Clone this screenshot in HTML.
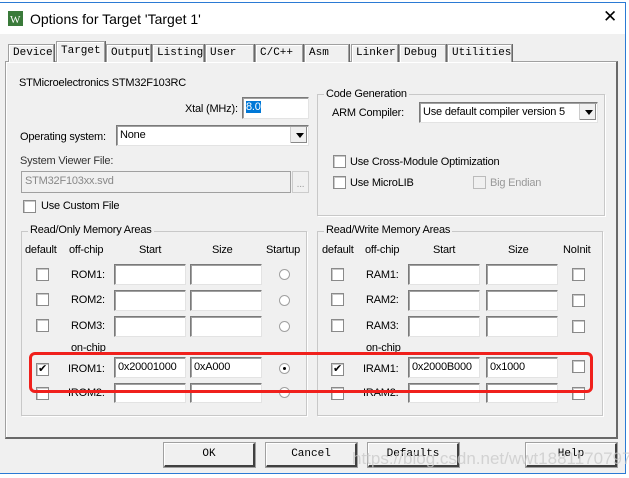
<!DOCTYPE html>
<html><head><meta charset="utf-8"><style>
*{box-sizing:border-box;margin:0;padding:0}
body{width:629px;height:478px;background:#fff;position:relative;overflow:hidden;font-family:"Liberation Sans",Arial,sans-serif;font-size:11px;letter-spacing:-0.2px;line-height:12px;color:#000}
.a{position:absolute;white-space:nowrap}
.win{position:absolute;left:0;top:2px;width:626px;height:472px;border:1px solid #2b7ad4;border-left:none;background:#f0f0f0}
.title{position:absolute;left:0;top:0;width:625px;height:31px;background:#fff}
.tab{position:absolute;top:41px;height:18px;border:1px solid #a0a0a0;border-bottom:none;background:#f0f0f0;font-family:"Liberation Mono",monospace;font-size:11px;letter-spacing:0;padding-left:4px;line-height:16px;box-shadow:inset 1px 1px 0 #fff, 1px 0 0 #696969}
.panel{position:absolute;left:5px;top:58px;width:613px;height:378px;border:1px solid #a0a0a0;border-right:2px solid #696969;border-bottom:2px solid #696969;box-shadow:inset 1px 1px 0 #fff}
.grp{position:absolute;border:1px solid #c8c8c8;box-shadow:1px 1px 0 #fff}
.leg{position:absolute;background:#f0f0f0;padding:0 2px;line-height:13px}
.in{position:absolute;height:21px;background:#fff;border:1px solid #7a7a7a;border-right-color:#e3e3e3;border-bottom-color:#e3e3e3;box-shadow:inset 1px 1px 0 #a0a0a0;padding:2px 3px;line-height:14px}
.cb{position:absolute;width:13px;height:13px;background:#fff;border:1px solid #8a8a8a;box-shadow:inset 1px 1px 0 #c8c8c8}
.rd{position:absolute;width:11px;height:11px;border-radius:50%;background:#fff;border:1px solid #a0a0a0}
.btn{position:absolute;top:440px;width:91px;height:24px;border:1px solid #fff;border-right:2px solid #404040;border-bottom:2px solid #404040;outline:1px solid #a0a0a0;background:#f0f0f0;font-family:"Liberation Mono",monospace;font-size:11px;letter-spacing:0;text-align:center;line-height:21px}
.dd{position:absolute;right:1px;top:1px;width:17px;height:16px;background:#f0f0f0;border-left:1px solid #ccc;box-shadow:inset -1px -1px 0 #888}
.dd:after{content:"";position:absolute;left:5px;top:6px;border:4px solid transparent;border-top:5px solid #000;border-bottom:none}
</style></head><body>
<div class="win">
<div class="title">
<svg class="a" style="left:8px;top:8px" width="15" height="15"><rect width="15" height="15" fill="#3a7a3a"/><text x="2" y="12" font-size="11" fill="#fff" font-family="Liberation Serif">W</text></svg>
<div class="a" style="left:30px;top:8px;font-size:14px;letter-spacing:0;line-height:16px;color:#000">Options for Target 'Target 1'</div>
<div class="a" style="left:603px;top:5px;font-size:17px;line-height:18px;font-weight:300">✕</div>
</div>
<div class="panel"></div>
<div class="tab" style="left:8px;width:46px">Device</div>
<div class="tab" style="left:56px;width:49px;top:38px;height:21px;z-index:2;border-bottom:none;padding-top:1px">Target</div>
<div class="tab" style="left:106px;width:45px">Output</div>
<div class="tab" style="left:152px;width:52px">Listing</div>
<div class="tab" style="left:205px;width:49px">User</div>
<div class="tab" style="left:255px;width:48px">C/C++</div>
<div class="tab" style="left:304px;width:45px">Asm</div>
<div class="tab" style="left:351px;width:47px">Linker</div>
<div class="tab" style="left:399px;width:47px">Debug</div>
<div class="tab" style="left:447px;width:65px">Utilities</div>

<div class="a" style="left:19px;top:74px">STMicroelectronics STM32F103RC</div>
<div class="a" style="left:185px;top:100px">Xtal (MHz):</div>
<div class="in" style="left:242px;top:94px;width:67px;height:22px"><span style="background:#0078d7;color:#fff">8.0</span></div>
<div class="a" style="left:20px;top:128px">Operating system:</div>
<div class="in" style="left:116px;top:122px;width:193px;height:21px;padding-top:2px">None<div class="dd"></div></div>
<div class="a" style="left:20px;top:152px;color:#333">System Viewer File:</div>
<div class="in" style="left:21px;top:168px;width:270px;height:22px;background:#f0f0f0;color:#888;box-shadow:none;border-color:#a0a0a0">STM32F103xx.svd</div>
<div class="a" style="left:292px;top:168px;width:17px;height:22px;border:1px solid #ccc;color:#999;text-align:center;font-size:10px;line-height:26px">...</div>
<div class="cb" style="left:23px;top:197px"></div>
<div class="a" style="left:41px;top:197px">Use Custom File</div>

<div class="grp" style="left:317px;top:91px;width:288px;height:122px"></div>
<div class="leg a" style="left:324px;top:85px">Code Generation</div>
<div class="a" style="left:332px;top:104px">ARM Compiler:</div>
<div class="in" style="left:419px;top:99px;width:179px;height:21px">Use default compiler version 5<div class="dd"></div></div>
<div class="cb" style="left:333px;top:152px"></div>
<div class="a" style="left:350px;top:153px">Use Cross-Module Optimization</div>
<div class="cb" style="left:333px;top:173px"></div>
<div class="a" style="left:350px;top:174px">Use MicroLIB</div>
<div class="cb" style="left:473px;top:173px;background:#f0f0f0;border-color:#bbb;box-shadow:none"></div>
<div class="a" style="left:490px;top:174px;color:#999">Big Endian</div>

<div class="grp" style="left:21px;top:228px;width:286px;height:185px"></div>
<div class="leg a" style="left:28px;top:221px">Read/Only Memory Areas</div>
<div class="a" style="left:25px;top:241px">default</div><div class="a" style="left:69px;top:241px">off-chip</div><div class="a" style="left:139px;top:241px">Start</div><div class="a" style="left:212px;top:241px">Size</div><div class="a" style="left:266px;top:241px">Startup</div>

<div class="grp" style="left:317px;top:228px;width:286px;height:185px"></div>
<div class="leg a" style="left:324px;top:221px">Read/Write Memory Areas</div>
<div class="a" style="left:322px;top:241px">default</div><div class="a" style="left:365px;top:241px">off-chip</div><div class="a" style="left:433px;top:241px">Start</div><div class="a" style="left:508px;top:241px">Size</div><div class="a" style="left:563px;top:241px">NoInit</div>

<div class="cb" style="left:36px;top:265px"></div><div class="a" style="left:71px;top:266px">ROM1:</div><div class="in" style="left:114px;top:261px;width:72px"></div><div class="in" style="left:190px;top:261px;width:72px"></div><div class="rd" style="left:279px;top:266px"></div>
<div class="cb" style="left:36px;top:290px"></div><div class="a" style="left:71px;top:291px">ROM2:</div><div class="in" style="left:114px;top:287px;width:72px"></div><div class="in" style="left:190px;top:287px;width:72px"></div><div class="rd" style="left:279px;top:292px"></div>
<div class="cb" style="left:36px;top:316px"></div><div class="a" style="left:71px;top:317px">ROM3:</div><div class="in" style="left:114px;top:313px;width:72px"></div><div class="in" style="left:190px;top:313px;width:72px"></div><div class="rd" style="left:279px;top:318px"></div>
<div class="a" style="left:71px;top:339px">on-chip</div>
<div class="cb" style="left:36px;top:360px;font-size:11px;line-height:10px;text-align:center">✔</div><div class="a" style="left:68px;top:360px">IROM1:</div><div class="in" style="left:114px;top:354px;width:72px;color:#000">0x20001000</div><div class="in" style="left:190px;top:354px;width:72px">0xA000</div><div class="rd" style="left:279px;top:360px"><div style="width:3px;height:3px;background:#000;border-radius:50%;margin:3px"></div></div>
<div class="cb" style="left:36px;top:384px"></div><div class="a" style="left:68px;top:384px">IROM2:</div><div class="in" style="left:114px;top:380px;width:72px;height:20px"></div><div class="in" style="left:190px;top:380px;width:72px;height:20px"></div><div class="rd" style="left:279px;top:384px"></div>

<div class="cb" style="left:331px;top:265px"></div><div class="a" style="left:366px;top:266px">RAM1:</div><div class="in" style="left:408px;top:261px;width:72px"></div><div class="in" style="left:486px;top:261px;width:72px"></div><div class="cb" style="left:572px;top:265px"></div>
<div class="cb" style="left:331px;top:290px"></div><div class="a" style="left:366px;top:291px">RAM2:</div><div class="in" style="left:408px;top:287px;width:72px"></div><div class="in" style="left:486px;top:287px;width:72px"></div><div class="cb" style="left:572px;top:291px"></div>
<div class="cb" style="left:331px;top:316px"></div><div class="a" style="left:366px;top:317px">RAM3:</div><div class="in" style="left:408px;top:313px;width:72px"></div><div class="in" style="left:486px;top:313px;width:72px"></div><div class="cb" style="left:572px;top:317px"></div>
<div class="a" style="left:366px;top:339px">on-chip</div>
<div class="cb" style="left:331px;top:360px;font-size:11px;line-height:10px;text-align:center">✔</div><div class="a" style="left:363px;top:360px">IRAM1:</div><div class="in" style="left:408px;top:354px;width:72px">0x2000B000</div><div class="in" style="left:486px;top:354px;width:72px">0x1000</div><div class="cb" style="left:572px;top:357px"></div>
<div class="cb" style="left:331px;top:384px"></div><div class="a" style="left:363px;top:384px">IRAM2:</div><div class="in" style="left:408px;top:380px;width:72px;height:20px"></div><div class="in" style="left:486px;top:380px;width:72px;height:20px"></div><div class="cb" style="left:572px;top:384px"></div>

<div class="a" style="left:29px;top:349px;width:564px;height:41px;border:3px solid #f0201c;border-radius:6px"></div>

<div class="btn" style="left:164px">OK</div>
<div class="btn" style="left:266px">Cancel</div>
<div class="btn" style="left:368px">Defaults</div>
<div class="btn" style="left:526px">Help</div>
<div class="a" style="left:352px;top:447px;font-size:17px;line-height:18px;letter-spacing:0;color:rgba(200,200,200,0.75)">https://blog.csdn.net/wwt18811707971</div>
</div>
</body></html>
